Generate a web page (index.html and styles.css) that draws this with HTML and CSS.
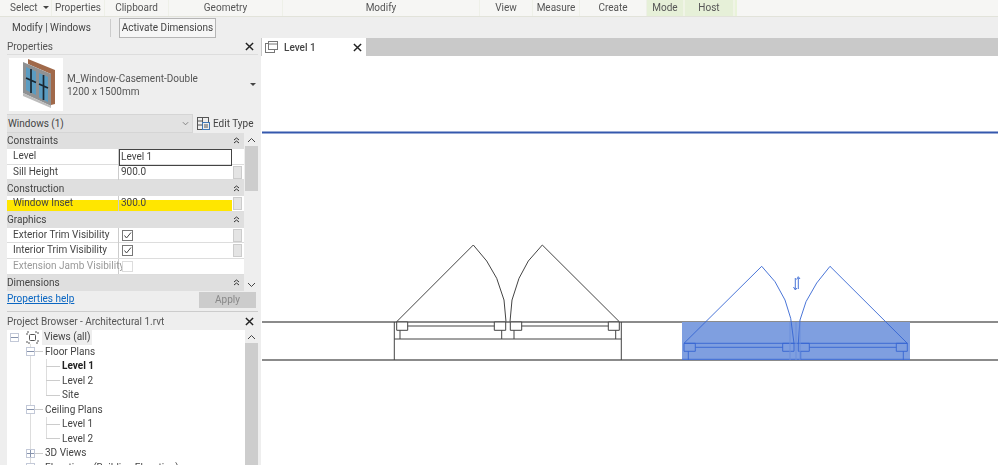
FILE: index.html
```html
<!DOCTYPE html>
<html lang="en">
<head>
<meta charset="utf-8">
<title>Modify | Windows</title>
<link rel="stylesheet" href="styles.css">
</head>
<body>
<div class="app">
  <div class="ribbon">
    <div class="rb rb-select">Select <span class="caret"></span></div>
    <div class="rb">Properties</div>
    <div class="rb">Clipboard</div>
    <div class="rb">Geometry</div>
    <div class="rb">Modify</div>
    <div class="rb">View</div>
    <div class="rb">Measure</div>
    <div class="rb">Create</div>
    <div class="rb rb-green">Mode</div>
    <div class="rb rb-green">Host</div>
    <div class="rb rb-pale"></div>
  </div>
  <div class="options">
    <span class="opt-title">Modify | Windows</span>
    <span class="opt-sep"></span>
    <button class="opt-btn">Activate Dimensions</button>
  </div>
  <div class="main">
    <aside class="side">
      <section class="props">
        <header class="pane-title"><span>Properties</span><svg class="close" viewBox="0 0 10 10"><path d="M1 1L9 9M9 1L1 9"/></svg></header>
        <div class="type">
          <div class="thumb">
            <svg viewBox="0 0 54 53" width="54" height="53">
              <path d="M19 1L46 12V46L42 47V16L19 6Z" fill="#a0694a"/>
              <path d="M14 4L42 16V48L14 35Z" fill="#8f9193"/>
              <path d="M17 9L27 13.500V37L17 32Z" fill="#5a9cc2"/>
              <path d="M30 15L39 19V44L30 39.500Z" fill="#5a9cc2"/>
              <path d="M22 11V35M34.500 17V42M17 20L27 24.500M30 26L39 30" stroke="#1a2630" stroke-width="1.700" fill="none"/>
              <path d="M14 35L42 48V50L14 38Z" fill="#bdbdbd"/>
            </svg>
          </div>
          <div class="type-name"><div>M_Window-Casement-Double</div><div>1200 x 1500mm</div></div>
          <span class="caret type-caret"></span>
        </div>
        <div class="filter">
          <div class="select"><span>Windows (1)</span><svg class="chev" viewBox="0 0 8 5"><path d="M1 1L4 4L7 1"/></svg></div>
          <div class="edit">
            <svg viewBox="0 0 13 13" width="13" height="13" fill="none" stroke="#555"><rect x=".5" y=".5" width="5" height="12"/><rect x="5.500" y=".5" width="6" height="5"/><rect x="5.500" y="5.500" width="7" height="7" stroke="#3f77b5"/><path d="M.5 4h5M.5 8h5M7 8h4M7 10h4" /></svg>
            <span>Edit Type</span>
          </div>
        </div>
        <div class="table-wrap">
          <div class="table">
            <div class="group"><span>Constraints</span><svg class="dchev" viewBox="0 0 7 7"><path d="M1 3L3.500 1L6 3M1 6L3.500 4L6 6"/></svg></div>
            <div class="row"><div class="k">Level</div><div class="v v-active">Level 1</div><div class="g"></div></div>
            <div class="row"><div class="k">Sill Height</div><div class="v">900.0</div><div class="g"><i></i></div></div>
            <div class="group"><span>Construction</span><svg class="dchev" viewBox="0 0 7 7"><path d="M1 3L3.500 1L6 3M1 6L3.500 4L6 6"/></svg></div>
            <div class="row row-mark"><div class="k">Window Inset</div><div class="v">300.0</div><div class="g"><i></i></div></div>
            <div class="group"><span>Graphics</span><svg class="dchev" viewBox="0 0 7 7"><path d="M1 3L3.500 1L6 3M1 6L3.500 4L6 6"/></svg></div>
            <div class="row"><div class="k">Exterior Trim Visibility</div><div class="v"><span class="check"><svg viewBox="0 0 9 9"><path d="M1.500 4.500L3.500 7L8 1.500"/></svg></span></div><div class="g"><i></i></div></div>
            <div class="row"><div class="k">Interior Trim Visibility</div><div class="v"><span class="check"><svg viewBox="0 0 9 9"><path d="M1.500 4.500L3.500 7L8 1.500"/></svg></span></div><div class="g"><i></i></div></div>
            <div class="row row-off"><div class="k">Extension Jamb Visibility</div><div class="v"><span class="check check-off"></span></div><div class="g"></div></div>
            <div class="group"><span>Dimensions</span><svg class="dchev" viewBox="0 0 7 7"><path d="M1 3L3.500 1L6 3M1 6L3.500 4L6 6"/></svg></div>
          </div>
          <div class="scroll">
            <svg class="arrow" viewBox="0 0 9 6"><path d="M1 5L4.500 1.500L8 5"/></svg>
            <div class="thumb-bar"></div>
            <div class="spacer"></div>
            <svg class="arrow" viewBox="0 0 9 6"><path d="M1 1L4.500 4.500L8 1"/></svg>
          </div>
        </div>
        <div class="props-foot"><a class="help">Properties help</a><button class="apply">Apply</button></div>
      </section>
      <section class="browser">
        <header class="pane-title"><span>Project Browser - Architectural 1.rvt</span><svg class="close" viewBox="0 0 10 10"><path d="M1 1L9 9M9 1L1 9"/></svg></header>
        <div class="browser-body">
          <ul class="tree">
            <li class="node n0"><span class="exp"></span><svg class="views" viewBox="0 0 13 13"><rect x="3.500" y="3.500" width="6" height="6" rx="1"/><path d="M1 4V1H4M9 1H12V4M12 9V12H9M4 12H1V9" stroke-dasharray="2 1"/></svg><span class="hl">Views (all)</span></li>
            <li class="node n1"><span class="exp"></span><b class="h-line"></b>Floor Plans</li>
            <li class="node n2"><b class="h-line"></b><strong>Level 1</strong></li>
            <li class="node n2"><b class="h-line"></b>Level 2</li>
            <li class="node n2 n2-last"><b class="h-line"></b>Site</li>
            <li class="node n1"><span class="exp"></span><b class="h-line"></b>Ceiling Plans</li>
            <li class="node n2"><b class="h-line"></b>Level 1</li>
            <li class="node n2 n2-last"><b class="h-line"></b>Level 2</li>
            <li class="node n1"><span class="exp exp-plus"></span><b class="h-line"></b>3D Views</li>
            <li class="node n1"><span class="exp"></span><b class="h-line"></b>Elevations (Building Elevation)</li>
          </ul>
          <div class="scroll scroll-b">
            <svg class="arrow" viewBox="0 0 9 6"><path d="M1 5L4.500 1.500L8 5"/></svg>
            <div class="thumb-bar thumb-b"></div>
          </div>
        </div>
      </section>
    </aside>
    <main class="view">
      <div class="tabs">
        <div class="tab">
          <svg class="tab-ico" viewBox="0 0 13 12" fill="none" stroke="#777"><rect x=".5" y="2.500" width="9" height="9"/><rect x="3.500" y=".5" width="9" height="8" fill="#fff"/><path d="M3.500 3h9"/></svg>
          <span>Level 1</span>
          <svg class="close close-tab" viewBox="0 0 10 10"><path d="M1 1L9 9M9 1L1 9"/></svg>
        </div>
      </div>
      <div class="canvas">
        <svg class="drawing" viewBox="261 56 737 409" width="737" height="409">
          <path d="M262 132.500H998" stroke="#3558ad" stroke-width="1.800" fill="none"/>
          <path d="M262 322H998M262 360H998" stroke="#666" stroke-width="1.300" fill="none"/>
          <g fill="none" stroke="#444" stroke-width="1">
            <path d="M396.700 321.700L473.300 245L486.700 261L496.700 278.300L504 300L506 321.700"/>
            <path d="M619.300 321.700L542.300 245L528.300 261L519 278.300L512 300L510 321.700"/>
            <path d="M396.700 322h11v8.300h-11zM494.300 322h11.400v8.300h-11.400zM510.300 322h11.400v8.300h-11.400zM608.300 322h11v8.300h-11z" fill="#fff"/>
            <path d="M407.700 326H494.300M521.700 326H608.300"/>
            <path d="M400 330.300V339M501.700 330.300V339M514 330.300V339M615.700 330.300V339"/>
            <path d="M394.300 339H621.300M394.300 322V360M621.300 322V360"/>
          </g>
          <rect x="682" y="322" width="228" height="38" fill="#7f9fe0"/>
          <g fill="none" stroke="#3565d2" stroke-width=".9">
            <path d="M684 343.300L761.700 266.300L775 281.700L785 300L790.700 318.300L794 343.300"/>
            <path d="M907.300 343.300L830 266.300L816.700 283L806 301.700L800 320L798.300 343.300"/>
            <path d="M684 343.300H907.300M684 343.300h11.300v8h-11.300zM782.700 343.300h11.300v8h-11.300zM798.300 343.300h11v8h-11zM896.300 343.300h11v8h-11z"/>
            <path d="M695.300 347.300H782.700M809.300 347.300H896.300"/>
            <path d="M688.300 351.300V360M800.700 351.300V360M903.300 351.300V360"/>
            <path d="M682 359.300H910"/>
            <path d="M795.300 278V289M793.500 287L795.300 290L797 288M798.300 289V278M796.600 279.500L798.300 276.700L800 279"/>
          </g>
          <path d="M790 322V360M796 322V360M800 322V360" fill="none" stroke="#6d8fdc" stroke-width="1"/>
        </svg>
      </div>
    </main>
  </div>
</div>
</body>
</html>
```
FILE: styles.css
```css
* { box-sizing: border-box; }
html, body { margin: 0; padding: 0; }
body { width: 998px; height: 465px; overflow: hidden; background: #eee; font-family: Roboto, "Noto Sans", sans-serif; font-size: 10px; color: #444; }
.app { width: 998px; height: 465px; display: flex; flex-direction: column; filter: blur(.3px); }

.ribbon { height: 17px; flex: none; display: grid; grid-template-columns: 52px 53px 64px 114px 197px 53px 47px 67px 38px 50px 1fr; background: #f6f6f4; border-bottom: 1px solid #e2e3da; }
.rb { text-align: center; line-height: 16px; color: #555; border-right: 1px solid #eef0e8; white-space: nowrap; }
.rb-select { text-align: left; padding-left: 10px; }
.rb-green { background: #e6f0d8; border-right: 2px solid #f0f4e6; color: #555; }
.rb-pale { background: #e9f3d9; border: 0; margin-right: 261px; }
.caret { display: inline-block; width: 0; height: 0; border: 3px solid transparent; border-top: 3px solid #444; border-bottom: 0; margin-left: 3px; vertical-align: 2px; }

.options { height: 21px; flex: none; display: flex; align-items: center; background: #eee; padding-left: 12px; }
.opt-title { width: 98px; color: #444; white-space: nowrap; }
.opt-sep { width: 1px; height: 18px; background: #ccc; }
.opt-btn { margin-left: 8px; width: 97px; height: 20px; padding: 0; background: #f6f6f6; border: 1px solid #b5b5b5; font: inherit; color: #444; white-space: nowrap; }

.main { flex: 1; min-height: 0; display: flex; }
.side { width: 261px; flex: none; display: flex; flex-direction: column; padding-left: 7px; padding-right: 3px; }

.pane-title { height: 17px; flex: none; display: flex; align-items: center; justify-content: space-between; padding-right: 4px; color: #555; border-bottom: 1px solid #ddd; }
.close { width: 9px; height: 9px; fill: none; stroke: #222; stroke-width: 1.6; }

.props { height: 274px; flex: none; border-bottom: 1px solid #ccc; display: flex; flex-direction: column; }
.type { height: 59px; flex: none; display: flex; align-items: flex-start; position: relative; padding: 3px 0 0 2px; }
.thumb { width: 54px; height: 53px; background: #fff; }
.type-name { margin: 14px 0 0 4px; line-height: 13px; color: #555; white-space: nowrap; }
.type-caret { position: absolute; right: 2px; top: 28px; }
.filter { height: 19px; flex: none; display: flex; }
.select { width: 186px; height: 19px; background: #e2e2e2; border: 1px solid #d5d5d5; border-left: 0; display: flex; align-items: center; justify-content: space-between; padding: 0 3px 0 1px; color: #444; }
.chev { width: 7px; height: 5px; fill: none; stroke: #777; }
.edit { margin-left: 4px; display: flex; align-items: center; gap: 3px; color: #444; white-space: nowrap; }

.table-wrap { display: flex; height: 157.5px; flex: none; }
.table { width: 237px; flex: none; }
.group { height: 15.75px; background: #dfdfdf; display: flex; align-items: center; justify-content: space-between; padding: 0 4px 0 0; color: #444; }
.dchev { width: 7px; height: 7px; fill: none; stroke: #333; stroke-width: 1; }
.row { height: 15.75px; display: grid; grid-template-columns: 112px 113px 12px; background: #fff; border-bottom: 1px solid #ddd; }
.k { padding-left: 6px; line-height: 14.75px; border-right: 1px solid #ccc; white-space: nowrap; color: #444; }
.v { padding-left: 2px; line-height: 14.75px; color: #444; display: flex; align-items: center; }
.v-active { border: 1px solid #444; padding-left: 1px; }
.g { padding: 1px 2px 1px 1px; }
.g i { display: block; height: 13px; background: #e4e4e4; border: 1px solid #ccc; }
.row-mark { background: linear-gradient(#fff 4px, #ffe600 4px); }
.row-mark .g { background: #fff; }
.row-off .k { color: #999; }
.check { width: 11px; height: 11px; margin-left: 1px; border: 1px solid #777; background: #fff; display: block; }
.check svg { display: block; width: 9px; height: 9px; fill: none; stroke: #444; stroke-width: 1; }
.check-off { border-color: #ddd; }

.scroll { width: 14px; flex: none; display: flex; flex-direction: column; align-items: center; background: #eee; }
.arrow { width: 9px; height: 6px; flex: none; fill: none; stroke: #444; stroke-width: 1; margin: 4px 0 3px; }
.thumb-bar { width: 13px; height: 45px; flex: none; background: #cdcdcd; }
.spacer { flex: 1; }

.props-foot { flex: 1; display: flex; align-items: flex-start; justify-content: space-between; padding: 1px 2px 0 0; }
.help { color: #0a66c2; text-decoration: underline; line-height: 14px; }
.apply { width: 57px; height: 16px; padding: 0; background: #ccc; border: 0; font: inherit; color: #888; }

.browser { flex: 1; min-height: 0; display: flex; flex-direction: column; }
.browser .pane-title { border: 0; height: 18px; }
.browser-body { flex: 1; min-height: 0; display: flex; background: #fff; overflow: hidden; }
.tree { width: 238px; flex: none; margin: 0; padding: 0; list-style: none; background: linear-gradient(#ddd, #ddd) 23px 14px / 1px 100% no-repeat, #fff; overflow: hidden; }
.node { height: 14.5px; line-height: 14.5px; display: flex; align-items: center; white-space: nowrap; color: #444; }
.n0 { padding-left: 3px; }
.n1 { padding-left: 19px; }
.n1 .exp { background-color: #fff; }
.n2 { padding-left: 39px; background: linear-gradient(#ddd, #ddd) 39px 0 / 1px 100% no-repeat; }
.n2-last { background-size: 1px 50%; }
.n2 strong { color: #222; font-weight: 700; }
.exp { width: 9px; height: 9px; flex: none; border: 1px solid #c3c9d8; background: linear-gradient(#8793ad, #8793ad) center / 7px 1px no-repeat; }
.exp-plus { background: linear-gradient(#8793ad, #8793ad) center / 7px 1px no-repeat, linear-gradient(#8793ad, #8793ad) center / 1px 7px no-repeat; }
.h-line { display: block; width: 8px; height: 1px; background: #ccc; margin-right: 2px; flex: none; }
.n2 .h-line { width: 14px; }
.views { width: 13px; height: 13px; margin: 0 3px 0 7px; fill: none; stroke: #555; flex: none; }
.hl { background: #eee; padding: 0 2px; }
.scroll-b { width: 13px; }
.thumb-b { height: 130px; }

.view { flex: 1; min-width: 0; display: flex; flex-direction: column; background: #fff; }
.tabs { height: 18px; flex: none; background: #c9c9c9; }
.tab { width: 104px; height: 18px; margin-left: 1px; background: #fff; display: flex; align-items: center; padding: 0 4px 0 3px; color: #444; font-weight: 500; }
.tab-ico { width: 13px; height: 12px; margin-right: 6px; flex: none; }
.close-tab { margin-left: auto; }
.canvas { flex: 1; min-height: 0; overflow: hidden; }
.drawing { display: block; }
```
